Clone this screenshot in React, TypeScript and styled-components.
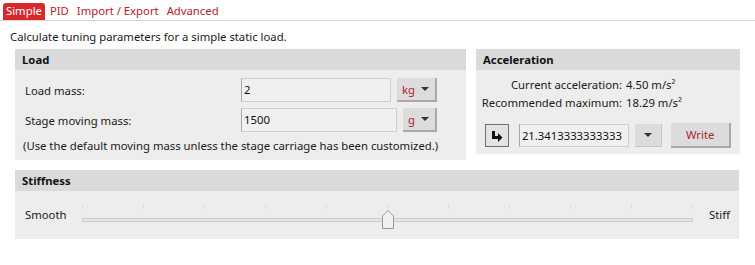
import React from 'react';
import styled, { createGlobalStyle } from 'styled-components';

const GlobalStyle = createGlobalStyle`
  html, body {
    margin: 0;
    padding: 0;
    background: #ffffff;
  }
  body {
    font-family: "Noto Sans", "Open Sans", sans-serif;
    font-size: 11.3px;
    color: #1a1a1a;
  }
`;

const RED = '#b3202e';

const Page = styled.div`
  width: 755px;
  height: 265px;
  overflow: hidden;
`;

const TabBar = styled.div`
  display: flex;
  align-items: flex-end;
  height: 20px;
  padding-left: 3px;
  border-bottom: 1px solid #d4d4d4;
`;

const Tab = styled.div<{ $active?: boolean }>`
  height: 17px;
  line-height: 16px;
  padding: 0 3px;
  margin-right: 2px;
  border-radius: 3px 3px 0 0;
  background: ${({ $active }) => ($active ? '#d9272e' : 'transparent')};
  color: ${({ $active }) => ($active ? '#ffffff' : RED)};
  white-space: nowrap;
`;

const Content = styled.div`
  padding: 0 15px;
`;

const Description = styled.div`
  margin: 8px 0 4px -5px;
  height: 16px;
  line-height: 16px;
`;

const TopRow = styled.div`
  display: flex;
  align-items: flex-start;
  gap: 10px;
`;

const Panel = styled.section<{ $width?: number }>`
  width: ${({ $width }) => ($width ? `${$width}px` : 'auto')};
  background: #ededed;
`;

const PanelHeader = styled.div`
  height: 21px;
  line-height: 21px;
  padding-left: 7px;
  background: #dadada;
  font-weight: 700;
  color: #111;
`;

const LoadBody = styled.div`
  padding: 8px 10px 6px 10px;
  display: flex;
  flex-direction: column;
  gap: 6px;
`;

const FieldRow = styled.div`
  display: flex;
  align-items: center;
  height: 24px;
`;

const FieldLabel = styled.div`
  width: 216px;
`;

const TextBox = styled.div<{ $width: number }>`
  width: ${({ $width }) => $width}px;
  height: 24px;
  box-sizing: border-box;
  border: 1px solid #cfcfcf;
  border-left-color: #a8a8a8;
  background: #f0f0f0;
  line-height: 22px;
  padding-left: 2px;
  color: #111;
  white-space: nowrap;
  overflow: hidden;
`;

const UnitCombo = styled.div<{ $width: number }>`
  width: ${({ $width }) => $width}px;
  height: 24px;
  box-sizing: border-box;
  margin-left: 6px;
  background: #dcdcdc;
  border-right: 2px solid #a9a9a9;
  border-bottom: 2px solid #a9a9a9;
  display: flex;
  align-items: center;
  justify-content: space-between;
  padding: 0 6px 0 5px;
  color: ${RED};
`;

const Caret = styled.span`
  width: 0;
  height: 0;
  border-left: 4px solid transparent;
  border-right: 4px solid transparent;
  border-top: 4px solid #333;
`;

const Note = styled.div`
  margin-left: -2px;
  line-height: 16px;
  white-space: nowrap;
`;

const AccelBody = styled.div`
  padding: 7px 9px 6px 9px;
`;

const StatGrid = styled.div`
  display: grid;
  grid-template-columns: 137px auto;
  column-gap: 4px;
  row-gap: 2px;
  line-height: 16px;
`;

const StatLabel = styled.div`
  display: flex;
  justify-content: flex-end;
  white-space: nowrap;
`;

const StatValue = styled.div`
  white-space: nowrap;
`;

const WriteRow = styled.div`
  display: flex;
  align-items: center;
  margin-top: 12px;
`;

const IconButton = styled.button`
  width: 24px;
  height: 23px;
  padding: 0;
  box-sizing: border-box;
  border: 1px solid #6e6e6e;
  background: #e3e3e3;
  display: flex;
  align-items: center;
  justify-content: center;
`;

const ValueBox = styled(TextBox)`
  margin-left: 10px;
  height: 23px;
  line-height: 21px;
`;

const DropButton = styled.div`
  width: 27px;
  height: 23px;
  box-sizing: border-box;
  margin-left: 6px;
  background: #dcdcdc;
  border-right: 1px solid #c4c4c4;
  border-bottom: 1px solid #c4c4c4;
  display: flex;
  align-items: center;
  justify-content: center;
`;

const WriteButton = styled.button`
  width: 60px;
  height: 25px;
  margin-left: 9px;
  box-sizing: border-box;
  border: none;
  border-right: 2px solid #a9a9a9;
  border-bottom: 2px solid #a9a9a9;
  background: #dcdcdc;
  color: ${RED};
  font-family: inherit;
  font-size: 11.3px;
  padding: 0;
`;

const StiffnessPanel = styled(Panel)`
  margin-top: 10px;
  width: 724px;
`;

const SliderBody = styled.div`
  height: 48px;
  display: flex;
  align-items: center;
  padding: 0 10px;
`;

const SliderLabel = styled.div<{ $width: number }>`
  width: ${({ $width }) => $width}px;
  flex-shrink: 0;
  margin-top: -1px;
`;

const SliderTrack = styled.div`
  position: relative;
  flex-shrink: 0;
  width: 611px;
  height: 48px;
  margin-right: 16px;
`;

const Rail = styled.div`
  position: absolute;
  left: 0;
  right: 0;
  top: 27px;
  height: 4px;
  box-sizing: border-box;
  border: 1px solid #c9cfcf;
  background: #e2e6e6;
`;

const Tick = styled.div`
  position: absolute;
  top: 14px;
  width: 1px;
  height: 4px;
  background: #dcdcdc;
`;

const Thumb = styled.svg`
  position: absolute;
  top: 19px;
`;

const ArrowIcon = () => (
  <svg width="12" height="12" viewBox="0 0 12 12">
    <path d="M1 1 H4 V6 H7 V3 L11.5 7.5 L7 12 V9 H1 Z" fill="#111" />
  </svg>
);

const ticks = Array.from({ length: 11 }, (_, i) => i);
const sliderValue = 5;

export default function App() {
  return (
    <Page>
      <GlobalStyle />
      <TabBar>
        <Tab $active>Simple</Tab>
        <Tab>PID</Tab>
        <Tab>Import / Export</Tab>
        <Tab>Advanced</Tab>
      </TabBar>
      <Content>
        <Description>Calculate tuning parameters for a simple static load.</Description>
        <TopRow>
          <Panel $width={451}>
            <PanelHeader>Load</PanelHeader>
            <LoadBody>
              <FieldRow>
                <FieldLabel>Load mass:</FieldLabel>
                <TextBox $width={150}>2</TextBox>
                <UnitCombo $width={40}>
                  kg <Caret />
                </UnitCombo>
              </FieldRow>
              <FieldRow>
                <FieldLabel>Stage moving mass:</FieldLabel>
                <TextBox $width={156}>1500</TextBox>
                <UnitCombo $width={34}>
                  g <Caret />
                </UnitCombo>
              </FieldRow>
              <Note>(Use the default moving mass unless the stage carriage has been customized.)</Note>
            </LoadBody>
          </Panel>
          <Panel $width={264}>
            <PanelHeader>Acceleration</PanelHeader>
            <AccelBody>
              <StatGrid>
                <StatLabel>Current acceleration:</StatLabel>
                <StatValue>4.50 m/s²</StatValue>
                <StatLabel>Recommended maximum:</StatLabel>
                <StatValue>18.29 m/s²</StatValue>
              </StatGrid>
              <WriteRow>
                <IconButton>
                  <ArrowIcon />
                </IconButton>
                <ValueBox $width={111}>21.3413333333333</ValueBox>
                <DropButton>
                  <Caret />
                </DropButton>
                <WriteButton>Write</WriteButton>
              </WriteRow>
            </AccelBody>
          </Panel>
        </TopRow>
        <StiffnessPanel>
          <PanelHeader>Stiffness</PanelHeader>
          <SliderBody>
            <SliderLabel $width={57}>Smooth</SliderLabel>
            <SliderTrack>
              {ticks.map((i) => (
                <Tick key={i} style={{ left: `${Math.round((i * 610) / 10)}px` }} />
              ))}
              <Rail />
              <Thumb
                width="12"
                height="19"
                viewBox="0 0 12 19"
                style={{ left: `${Math.round((sliderValue * 610) / 10) - 5}px` }}
              >
                <path d="M0.5 6 L6 0.5 L11.5 6 V18.5 H0.5 Z" fill="#f0f0f0" stroke="#9a9a9a" />
              </Thumb>
            </SliderTrack>
            <SliderLabel $width={30}>Stiff</SliderLabel>
          </SliderBody>
        </StiffnessPanel>
      </Content>
    </Page>
  );
}
